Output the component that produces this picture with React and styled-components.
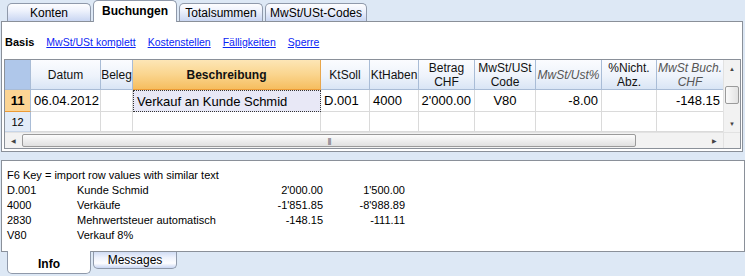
import React from 'react';
import styled, { createGlobalStyle, css } from 'styled-components';

const GlobalStyle = createGlobalStyle`
  html, body {
    margin: 0;
    padding: 0;
    background: #dde8f5;
  }
  body {
    font-family: "Liberation Sans", Arial, sans-serif;
    font-size: 11px;
    color: #000;
  }
`;

const Window = styled.div`
  width: 745px;
  height: 276px;
  display: flex;
  flex-direction: column;
  overflow: hidden;
  background: #dde8f5;
`;

const TabStrip = styled.div`
  display: flex;
  align-items: flex-end;
  gap: 2px;
  height: 21px;
  padding-left: 7px;
  position: relative;
  z-index: 1;
`;

const tabBase = css`
  box-sizing: border-box;
  width: ${p => p.$w || 84}px;
  display: flex;
  align-items: center;
  justify-content: center;
  border: 1px solid #8f99aa;
  font-size: 12px;
  white-space: nowrap;
`;

const TopTab = styled.div`
  ${tabBase};
  height: 18px;
  border-bottom: none;
  border-radius: 5px 5px 0 0;
  background: linear-gradient(#fdfdff 0%, #eef2fc 40%, #c9d6f2 100%);
  ${p => p.$active && css`
    height: 22px;
    margin-bottom: -1px;
    background: #fff;
    font-weight: bold;
    padding-bottom: 2px;
  `}
`;

const MainPanel = styled.div`
  box-sizing: border-box;
  margin: 0 2px 0 1px;
  height: 131px;
  border: 1px solid #8a9099;
  background: #fff;
  padding: 0 1px 0 2px;
  display: flex;
  flex-direction: column;
`;

const ViewBar = styled.div`
  height: 37px;
  display: flex;
  align-items: center;
  gap: 12px;
  padding: 2px 0 0 1px;
  box-sizing: border-box;
`;

const ViewCurrent = styled.span`
  font-weight: bold;
  font-size: 11px;
`;

const ViewLink = styled.a`
  color: #0a24f5;
  text-decoration: underline;
  font-size: 10.5px;
  cursor: pointer;
`;

const GridFrame = styled.div`
  box-sizing: border-box;
  height: 90px;
  border: 1px solid #8a9099;
  display: grid;
  grid-template-columns: 1fr 17px;
  grid-template-rows: 72px 16px;
`;

const Table = styled.div`
  display: grid;
  grid-template-columns: 26px 70px 32px 188px 49px 49px 56px 61px 66px 55px 67px;
  grid-template-rows: 30px 22px 20px;
  overflow: hidden;
`;

const HeadCell = styled.div`
  box-sizing: border-box;
  border-right: 1px solid #a9bcd6;
  border-bottom: 1px solid #a9bcd6;
  background: linear-gradient(#fbfcff 0%, #eef3fb 55%, #d9e5f5 100%);
  display: flex;
  align-items: center;
  justify-content: center;
  text-align: center;
  font-size: 12px;
  line-height: 14px;
  white-space: nowrap;
  color: ${p => (p.$italic ? '#555' : '#111')};
  font-style: ${p => (p.$italic ? 'italic' : 'normal')};
  ${p => p.$corner && css`
    background: #afc7ea;
  `}
  ${p => p.$active && css`
    background: linear-gradient(#fde6b6 0%, #fad58e 50%, #f6bd5f 100%);
    border-bottom-color: #ec9b36;
    border-right-color: #e8a64c;
    font-weight: bold;
  `}
`;

const RowHead = styled.div`
  box-sizing: border-box;
  border-right: 1px solid #a9bcd6;
  border-bottom: 1px solid ${p => (p.$active ? '#ec9b36' : '#c7d5e8')};
  background: ${p => (p.$active ? '#fcd594' : '#e3ecf8')};
  display: flex;
  align-items: center;
  justify-content: center;
  font-weight: ${p => (p.$active ? 'bold' : 'normal')};
  font-size: ${p => (p.$active ? '13px' : '11px')};
`;

const Cell = styled.div`
  box-sizing: border-box;
  border-right: 1px solid #dadada;
  border-bottom: 1px solid #dadada;
  display: flex;
  align-items: center;
  justify-content: ${p => p.$align || 'flex-start'};
  padding: 0 3px;
  font-size: 13px;
  white-space: nowrap;
  overflow: hidden;
  ${p => p.$focus && css`
    background: #e8e8f6;
    border: 1px dotted #333;
  `}
`;

const VScroll = styled.div`
  display: flex;
  flex-direction: column;
  background: #f2f2f2;
  border-left: 1px solid #e2e2e2;
`;

const HScroll = styled.div`
  display: flex;
  background: #f2f2f2;
  border-top: 1px solid #e2e2e2;
`;

const ScrollCorner = styled.div`
  background: #f2f2f2;
  border-top: 1px solid #e2e2e2;
  border-left: 1px solid #e2e2e2;
`;

const Arrow = styled.div`
  flex: 0 0 17px;
  display: flex;
  align-items: center;
  justify-content: center;
  color: #444;
  font-size: 6px;
`;

const Track = styled.div`
  flex: 1;
  display: flex;
  flex-direction: ${p => (p.$vertical ? 'column' : 'row')};
  padding: ${p => (p.$vertical ? '9px 0 0 0' : '0')};
`;

const Thumb = styled.div`
  box-sizing: border-box;
  border: 1px solid #9a9a9a;
  border-radius: 2px;
  display: flex;
  align-items: center;
  justify-content: center;
  color: #666;
  font-size: 8px;
  letter-spacing: -1px;
  ${p => (p.$vertical
    ? css`
      height: 18px;
      margin: 0 1px;
      background: linear-gradient(90deg, #fafafa, #e2e2e2);
    `
    : css`
      margin: 1px 0;
      width: 614px;
      background: linear-gradient(#fcfcfc, #e0e0e0);
    `)}
`;

const Gap = styled.div`
  height: 8px;
`;

const InfoPanel = styled.div`
  box-sizing: border-box;
  margin: 0 0 0 1px;
  height: 92px;
  border: 1px solid #8a9099;
  background: #fff;
  padding: 6px 5px 0;
`;

const InfoLine = styled.div`
  display: grid;
  grid-template-columns: 70px 160px 86px 82px;
  height: 15px;
  align-items: center;
  font-size: 11px;
  white-space: nowrap;
`;

const Amount = styled.span`
  text-align: right;
`;

const BottomStrip = styled.div`
  display: flex;
  align-items: flex-start;
  gap: 2px;
  padding-left: 7px;
  position: relative;
  z-index: 1;
`;

const BottomTab = styled.div`
  ${tabBase};
  height: 17px;
  border-top: none;
  border-radius: 0 0 5px 5px;
  background: linear-gradient(#d0dcf4 0%, #eef2fc 35%, #fdfdff 70%, #c9d6f2 100%);
  ${p => p.$active && css`
    height: 23px;
    margin-top: -1px;
    background: #fff;
    font-weight: bold;
    padding-top: 3px;
  `}
`;

const columns = [
  { label: 'Datum' },
  { label: 'Beleg' },
  { label: 'Beschreibung', active: true },
  { label: 'KtSoll' },
  { label: 'KtHaben' },
  { label: ['Betrag', 'CHF'] },
  { label: ['MwSt/USt', 'Code'] },
  { label: 'MwSt/Ust%', italic: true },
  { label: ['%Nicht.', 'Abz.'] },
  { label: ['MwSt Buch.', 'CHF'], italic: true },
];

const row = [
  { v: '06.04.2012' },
  { v: '' },
  { v: 'Verkauf an Kunde Schmid', focus: true },
  { v: 'D.001' },
  { v: '4000' },
  { v: "2'000.00", align: 'flex-end' },
  { v: 'V80', align: 'center' },
  { v: '-8.00', align: 'flex-end' },
  { v: '' },
  { v: '-148.15', align: 'flex-end' },
];

const info = [
  ['D.001', 'Kunde Schmid', "2'000.00", "1'500.00"],
  ['4000', 'Verkäufe', "-1'851.85", "-8'988.89"],
  ['2830', 'Mehrwertsteuer automatisch', '-148.15', '-111.11'],
  ['V80', 'Verkauf 8%', '', ''],
];

const renderLabel = label =>
  Array.isArray(label) ? (
    <span>
      {label[0]}
      <br />
      {label[1]}
    </span>
  ) : (
    label
  );

export default function App() {
  return (
    <Window>
      <GlobalStyle />
      <TabStrip>
        <TopTab>Konten</TopTab>
        <TopTab $active>Buchungen</TopTab>
        <TopTab>Totalsummen</TopTab>
        <TopTab $w={102}>MwSt/USt-Codes</TopTab>
      </TabStrip>

      <MainPanel>
        <ViewBar>
          <ViewCurrent>Basis</ViewCurrent>
          <ViewLink>MwSt/USt komplett</ViewLink>
          <ViewLink>Kostenstellen</ViewLink>
          <ViewLink>Fälligkeiten</ViewLink>
          <ViewLink>Sperre</ViewLink>
        </ViewBar>

        <GridFrame>
          <Table>
            <HeadCell $corner />
            {columns.map((c, i) => (
              <HeadCell key={i} $active={c.active} $italic={c.italic}>
                {renderLabel(c.label)}
              </HeadCell>
            ))}

            <RowHead $active>11</RowHead>
            {row.map((c, i) => (
              <Cell key={i} $align={c.align} $focus={c.focus}>
                {c.v}
              </Cell>
            ))}

            <RowHead>12</RowHead>
            {row.map((c, i) => (
              <Cell key={i} />
            ))}
          </Table>

          <VScroll>
            <Arrow>▲</Arrow>
            <Track $vertical>
              <Thumb $vertical />
            </Track>
            <Arrow>▼</Arrow>
          </VScroll>

          <HScroll>
            <Arrow>◀</Arrow>
            <Track>
              <Thumb>|||</Thumb>
            </Track>
            <Arrow>▶</Arrow>
          </HScroll>
          <ScrollCorner />
        </GridFrame>
      </MainPanel>

      <Gap />

      <InfoPanel>
        <InfoLine>
          <span style={{ gridColumn: '1 / -1' }}>F6 Key = import row values with similar text</span>
        </InfoLine>
        {info.map((r, i) => (
          <InfoLine key={i}>
            <span>{r[0]}</span>
            <span>{r[1]}</span>
            <Amount>{r[2]}</Amount>
            <Amount>{r[3]}</Amount>
          </InfoLine>
        ))}
      </InfoPanel>

      <BottomStrip>
        <BottomTab $active>Info</BottomTab>
        <BottomTab>Messages</BottomTab>
      </BottomStrip>
    </Window>
  );
}
